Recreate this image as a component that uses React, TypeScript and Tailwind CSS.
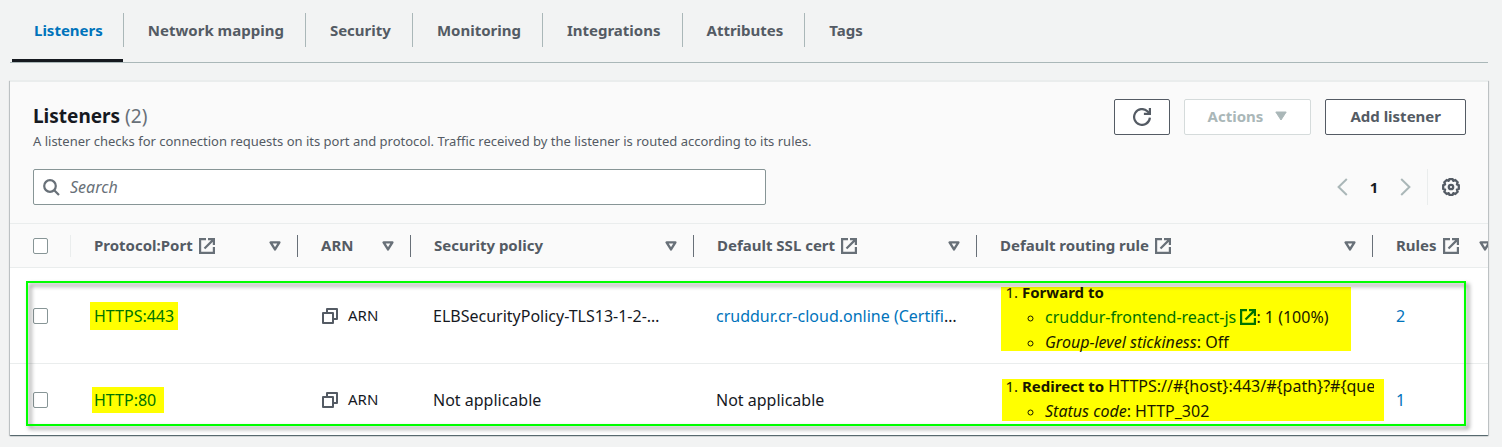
import React from "react";

const tabs = ["Network mapping", "Security", "Monitoring", "Integrations", "Attributes", "Tags"];

function ExternalIcon({ className = "" }: { className?: string }) {
  return (
    <svg viewBox="0 0 16 16" className={"h-4 w-4 shrink-0 " + className} fill="none" stroke="currentColor" strokeWidth="2.2" aria-hidden="true">
      <path d="M7 1.1H1.1v13.8h13.8V9" />
      <path d="M9 1.1h5.9V7M14.9 1.1L5.5 10.5" />
    </svg>
  );
}

function CaretIcon() {
  return (
    <svg viewBox="0 0 12 10" className="h-[10px] w-3 shrink-0" fill="none" stroke="#687078" strokeWidth="2.4" strokeLinejoin="round" aria-hidden="true">
      <path d="M1.6 1.4h8.8L6 8.4z" />
    </svg>
  );
}

function CopyIcon() {
  return (
    <svg viewBox="0 0 16 16" className="h-4 w-4 shrink-0 text-[#545b64]" fill="none" stroke="currentColor" strokeWidth="2" strokeLinejoin="round" aria-hidden="true">
      <path d="M1 5h10v10H1z" />
      <path d="M5 5V1h10v10h-4" />
    </svg>
  );
}

function Checkbox({ label }: { label: string }) {
  return (
    <input
      type="checkbox"
      aria-label={label}
      className="block h-4 w-[15px] appearance-none rounded-[2px] border border-[#879596] bg-white"
    />
  );
}

const columns = [
  { name: "Protocol:Port", external: true },
  { name: "ARN", external: false },
  { name: "Security policy", external: false },
  { name: "Default SSL cert", external: true },
  { name: "Default routing rule", external: true },
  { name: "Rules", external: true },
];

function ArnCell() {
  return (
    <button type="button" className="flex items-center gap-[10px] text-[15px]">
      <CopyIcon />
      ARN
    </button>
  );
}

export default function App() {
  return (
    <div className="min-h-screen bg-[#f2f3f3] pr-[14px] pb-3 pl-[10px] font-['Noto_Sans',sans-serif] text-[15px] leading-6 text-[#16191f]">
      <nav className="flex h-[63px] items-stretch border-b border-[#aab7b8] pl-[2px] font-bold text-[#545b64]">
        <a href="#listeners" className="flex items-center border-b-[3px] border-[#16191f] pr-5 pl-[22px] text-[#0073bb]">
          Listeners
        </a>
        {tabs.map((tab) => (
          <a key={tab} href="#tab" className="mt-[13px] flex h-[34px] items-center border-l border-[#aab7b8] pr-[21px] pl-6">
            {tab}
          </a>
        ))}
      </nav>

      <section className="mt-[17px] overflow-hidden border-t-2 border-[#eaeded] bg-white shadow-[0_1px_1px_0_rgba(0,28,36,0.5),1px_1px_1px_0_rgba(0,28,36,0.15),-1px_1px_1px_0_rgba(0,28,36,0.15)]">
        <header className="border-b border-[#eaeded] bg-[#fafafa] pt-[17px] pr-[22px] pb-[18px] pl-[23px]">
          <div className="flex items-start justify-between">
            <div className="pt-[3px]">
              <h2 className="text-[19px] leading-7 font-bold">
                Listeners <span className="font-normal text-[#687078]">(2)</span>
              </h2>
              <p className="text-[13px] leading-[22px] text-[#545b64]">
                A listener checks for connection requests on its port and protocol. Traffic received by the listener is routed according to its rules.
              </p>
            </div>
            <div className="flex gap-[14px] font-bold text-[#545b64]">
              <button type="button" aria-label="Refresh" className="flex h-9 w-14 items-center justify-center rounded-[2px] border border-[#545b64] bg-white">
                <svg viewBox="0 0 18 18" className="h-[18px] w-[18px]" fill="none" stroke="currentColor" strokeWidth="2.2" aria-hidden="true">
                  <path d="M16.9 9.6A7.9 7.9 0 1 1 14.4 3.2L16.4 5.2" />
                  <path d="M16.9 0v5.9h-6" />
                </svg>
              </button>
              <button type="button" disabled className="flex h-9 items-center gap-3 rounded-[2px] border border-[#d5dbdb] bg-white px-[23px] pb-[2px] text-[#aab7b8]">
                Actions
                <svg viewBox="0 0 12 10" className="h-[10px] w-3" fill="currentColor" stroke="currentColor" strokeLinejoin="round" aria-hidden="true">
                  <path d="M.8 1h10.4L6 9z" />
                </svg>
              </button>
              <button type="button" className="h-9 rounded-[2px] border border-[#545b64] bg-white px-6 pb-[2px]">
                Add listener
              </button>
            </div>
          </div>
          <div className="mt-[17px] flex items-center justify-between">
            <label className="flex h-9 max-w-[733px] flex-1 items-center gap-[10px] rounded-[2px] border border-[#879596] bg-white px-[9px]">
              <svg viewBox="0 0 17 17" className="h-[17px] w-[17px] shrink-0 text-[#687078]" fill="none" stroke="currentColor" strokeWidth="2.2" aria-hidden="true">
                <circle cx="7" cy="7" r="5.8" />
                <path d="M11.2 11.2L16 16" />
              </svg>
              <input type="text" aria-label="Search" placeholder="Search" className="w-full bg-transparent text-base outline-none placeholder:text-[#687078] placeholder:italic" />
            </label>
            <div className="flex h-9 items-center">
              <button type="button" aria-label="Previous page" className="text-[#aab7b8]">
                <svg viewBox="0 0 11 18" className="h-[18px] w-[11px]" fill="none" stroke="currentColor" strokeWidth="2" aria-hidden="true">
                  <path d="M9.8 1L1.6 9l8.2 8" />
                </svg>
              </button>
              <span className="w-[52px] text-center font-bold">1</span>
              <button type="button" aria-label="Next page" className="text-[#aab7b8]">
                <svg viewBox="0 0 11 18" className="h-[18px] w-[11px]" fill="none" stroke="currentColor" strokeWidth="2" aria-hidden="true">
                  <path d="M1.2 1l8.2 8-8.2 8" />
                </svg>
              </button>
              <button type="button" aria-label="Preferences" className="ml-4 flex h-9 items-center border-l border-[#eaeded] pr-[6px] pl-[14px] text-[#545b64]">
                <svg viewBox="0 0 18 18" className="h-[18px] w-[18px]" fill="none" stroke="currentColor" strokeWidth="2.3" strokeLinejoin="round" aria-hidden="true">
                  <path d="M7.3 1.2h3.4l.6 1.7 2-.9L15.7 4.4l-.8 2 1.9.7v3.8l-1.9.7.8 2-2.4 2.4-2-.9-.6 1.7H7.3l-.6-1.7-2 .9-2.4-2.4.8-2-1.9-.7V7.1l1.9-.7-.8-2L4.7 2l2 .9z" />
                  <circle cx="9" cy="9" r="2.2" />
                </svg>
              </button>
            </div>
          </div>
        </header>

        <div className="relative">
          <table className="w-full min-w-[1498px] table-fixed border-separate border-spacing-0 text-left">
            <colgroup>
              <col className="w-[61px]" />
              <col className="w-[227px]" />
              <col className="w-[113px]" />
              <col className="w-[283px]" />
              <col className="w-[283px]" />
              <col className="w-[396px]" />
              <col className="w-[135px]" />
            </colgroup>
            <thead>
              <tr className="h-11 bg-[#fafafa] text-[#545b64]">
                <th className="border-b border-[#eaeded] p-0">
                  <div className="flex h-[22px] items-center border-r border-[#eaeded] pl-[23px]">
                    <Checkbox label="Select all listeners" />
                  </div>
                </th>
                {columns.map((column) => (
                  <th key={column.name} className="border-b border-[#eaeded] p-0">
                    <div className="flex h-[22px] items-center border-r border-[#687078] pr-4 pl-[23px] font-bold whitespace-nowrap">
                      <span className="pb-[2px]">{column.name}</span>
                      {column.external && <ExternalIcon className="ml-[6px] text-[#687078]" />}
                      <span className="ml-auto">
                        <CaretIcon />
                      </span>
                    </div>
                  </th>
                ))}
              </tr>
            </thead>
            <tbody className="text-base [&>tr:first-child>td]:border-b [&>tr:first-child>td]:border-[#eaeded]">
              <tr className="h-24">
                <td className="p-0 pl-[23px]">
                  <Checkbox label="Select HTTPS:443" />
                </td>
                <td className="p-0 pl-[19px]">
                  <a href="#https" className="inline-block bg-[#ffff00] px-1 py-[2px] text-[#007300]">HTTPS:443</a>
                </td>
                <td className="p-0 pl-6"><ArnCell /></td>
                <td className="p-0 pl-[22px] whitespace-nowrap">ELBSecurityPolicy-TLS13-1-2-…</td>
                <td className="p-0 pl-[22px] whitespace-nowrap">
                  <a href="#cert" className="text-[#0073bb]">cruddur.cr-cloud.online (Certifi</a>…
                </td>
                <td className="p-0 pt-[7px] pl-6">
                  <div className="flex h-16 w-[350px] items-center bg-[#ffff00] pb-[3px] leading-[25px] text-[#191900]">
                    <ol className="list-decimal pl-[21px]">
                      <li className="marker:text-[15px]">
                        <b className="text-[15px]">Forward to</b>
                        <ul className="list-[circle] pl-[23px]">
                          <li className="whitespace-nowrap marker:text-[12px]">
                            <a href="#target" className="text-[#007300]">
                              cruddur-frontend-react-js <ExternalIcon className="inline align-[-2px]" />
                            </a>
                            : 1 (100%)
                          </li>
                          <li className="marker:text-[12px]"><i>Group-level stickiness</i>: Off</li>
                        </ul>
                      </li>
                    </ol>
                  </div>
                </td>
                <td className="p-0 pl-[23px]"><a href="#rules" className="text-[#0073bb]">2</a></td>
              </tr>
              <tr className="h-[71px]">
                <td className="p-0 pl-[23px]">
                  <Checkbox label="Select HTTP:80" />
                </td>
                <td className="p-0 pl-[21px]">
                  <a href="#http" className="inline-block bg-[#ffff00] py-px pr-2 pl-[2px] text-[#007300]">HTTP:80</a>
                </td>
                <td className="p-0 pl-6"><ArnCell /></td>
                <td className="p-0 pl-[22px]">Not applicable</td>
                <td className="p-0 pl-[22px]">Not applicable</td>
                <td className="p-0 pl-[25px]">
                  <div className="flex h-[42px] w-[382px] items-center bg-[#ffff00] pr-[10px] pb-[2px] leading-[25px] text-[#191900]">
                    <ol className="w-full list-decimal overflow-hidden pl-5">
                      <li className="whitespace-nowrap marker:text-[15px]">
                        <b className="text-[15px]">Redirect to</b> HTTPS://#{"{host}"}:443/#{"{path}"}?#{"{quer"}
                        <ul className="list-[circle] pl-[23px]">
                          <li className="marker:text-[12px]"><i>Status code</i>: HTTP_302</li>
                        </ul>
                      </li>
                    </ol>
                  </div>
                </td>
                <td className="p-0 pl-[23px]"><a href="#rules" className="text-[#0073bb]">1</a></td>
              </tr>
            </tbody>
          </table>
          <div className="pointer-events-none absolute top-[57px] right-[22px] bottom-[9px] left-4 border-2 border-[#00ff00] drop-shadow-[3px_3px_2px_rgba(0,0,0,0.5)]" />
        </div>
      </section>
    </div>
  );
}
